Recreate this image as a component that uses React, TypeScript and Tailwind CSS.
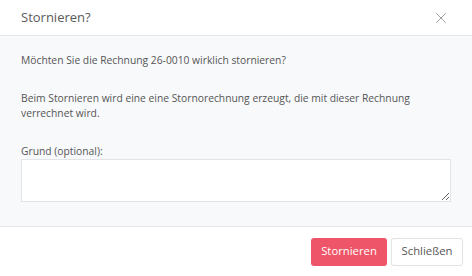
import { X } from "lucide-react";

export default function App() {
  return (
    <div className="w-[472px] h-[276px] bg-white flex flex-col font-['Open_Sans',sans-serif] text-[#555]">
      <div className="h-[36px] shrink-0 flex items-center justify-between pl-[21px] pr-[22px] border-b border-[#e5e7eb]">
        <span className="text-[13px] text-[#5a5a5a]">Stornieren?</span>
        <X className="w-[18px] h-[18px] text-[#8a8a8a]" strokeWidth={1.1} />
      </div>

      <div className="flex-1 bg-[#f8f9fb] px-[21px] pt-[17px] border-b border-[#e5e7eb] text-[10.3px] leading-[15px]">
        <p>Möchten Sie die Rechnung 26-0010 wirklich stornieren?</p>
        <p className="mt-[23px]">
          Beim Stornieren wird eine eine Stornorechnung erzeugt, die mit dieser Rechnung
          verrechnet wird.
        </p>
        <label className="block mt-[23px] leading-[14px]">Grund (optional):</label>
        <textarea className="block w-full h-[43px] mt-[1px] bg-white border border-[#e2e4e8] outline-none" />
      </div>

      <div className="h-[49px] shrink-0 flex items-center justify-end gap-[4px] pr-[9px]">
        <button className="h-[28px] w-[76px] rounded-[3px] bg-[#ef5568] text-white text-[11.3px]">
          Stornieren
        </button>
        <button className="h-[28px] w-[72px] rounded-[3px] bg-white border border-[#e3e3e3] text-[#555] text-[11.3px]">
          Schließen
        </button>
      </div>
    </div>
  );
}
